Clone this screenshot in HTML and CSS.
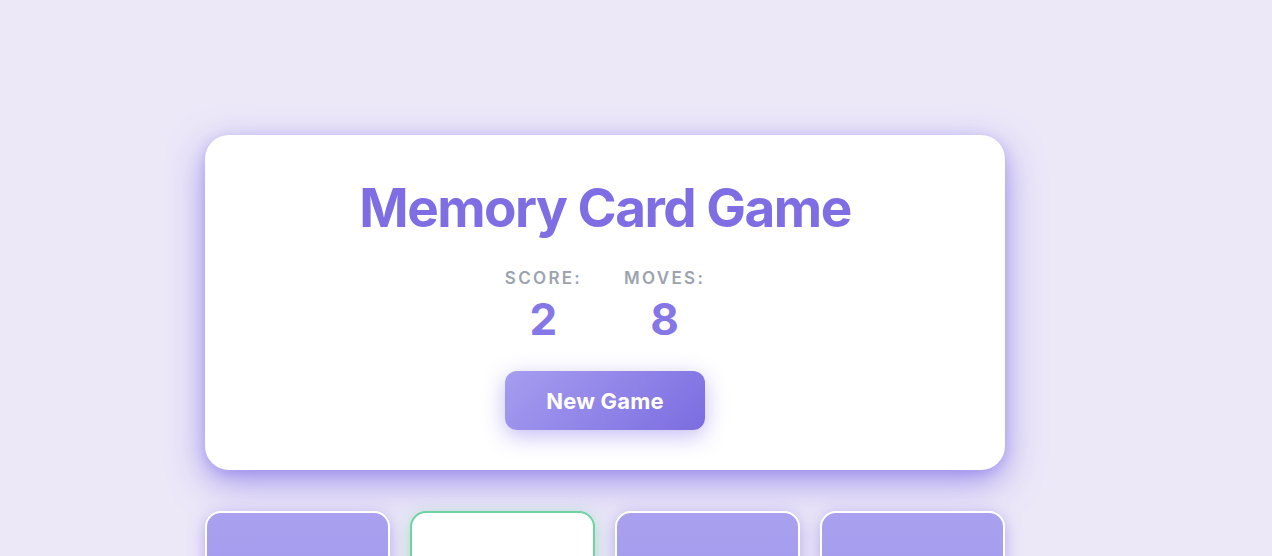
FILE: index.html
```html
<!DOCTYPE html>
<html>
<head>
    <title>Memory Card Game</title>
    <link rel="stylesheet" href="styles.css">
</head>
<body>
    <div class="game">
        <div class="panel">
            <h1>Memory Card Game</h1>
            <div class="stats">
                <div class="stat">
                    <div class="stat-label">Score:</div>
                    <div class="stat-value">2</div>
                </div>
                <div class="stat">
                    <div class="stat-label">Moves:</div>
                    <div class="stat-value">8</div>
                </div>
            </div>
            <button class="new-game">New Game</button>
        </div>

        <div class="board">
            <div class="card"></div>
            <div class="card flipped"></div>
            <div class="card"></div>
            <div class="card"></div>
            <div class="card"></div>
            <div class="card"></div>
            <div class="card"></div>
            <div class="card"></div>
        </div>
    </div>
</body>
</html>
```

FILE: styles.css
```css
body {
    margin: 0;
    padding: 135px 0 40px 205px;
    background-color: #ece8f8;
    font-family: Inter, "Noto Sans", sans-serif;
}
.game {
    width: 800px;
}
.panel {
    background-color: white;
    border-radius: 24px;
    padding: 42px 40px 40px;
    text-align: center;
    box-shadow: 0 12px 36px rgba(124, 106, 232, 0.65), 0 4px 12px rgba(124, 106, 232, 0.3);
}
h1 {
    margin: 0 0 27px;
    font-size: 53px;
    line-height: 1.2;
    font-weight: 700;
    color: #7f6de3;
    letter-spacing: -1.5px;
}
.stats {
    display: flex;
    justify-content: center;
    gap: 42px;
    margin-bottom: 26px;
}
.stat-label {
    font-size: 17px;
    font-weight: 600;
    letter-spacing: 2.3px;
    text-transform: uppercase;
    color: #9ca3af;
}
.stat-value {
    font-size: 44px;
    font-weight: 700;
    line-height: 1.2;
    color: #8677e6;
    margin-top: 5px;
}
.new-game {
    width: 200px;
    height: 59px;
    border: none;
    border-radius: 12px;
    background: linear-gradient(135deg, #a69ef0, #7c6ce0);
    color: white;
    font-family: inherit;
    font-size: 22px;
    font-weight: 700;
    letter-spacing: 0.2px;
    cursor: pointer;
    box-shadow: 0 6px 22px rgba(124, 106, 232, 0.45);
}
.board {
    display: grid;
    grid-template-columns: repeat(4, 1fr);
    gap: 20px;
    margin-top: 41px;
}
.card {
    height: 185px;
    box-sizing: border-box;
    border: 2px solid white;
    border-radius: 16px;
    background: linear-gradient(180deg, #a9a1ef, #9a90e9);
    box-shadow: 0 4px 16px rgba(124, 106, 232, 0.5);
}
.card.flipped {
    background: white;
    border-color: #6dd3a0;
    box-shadow: 0 4px 16px rgba(109, 211, 160, 0.55);
}
```
